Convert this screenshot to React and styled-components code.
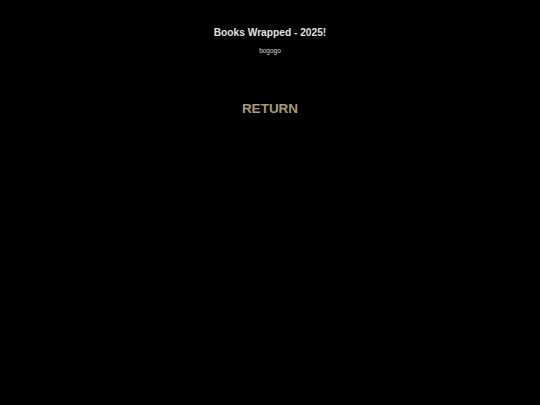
import React from "react";
import styled, { createGlobalStyle } from "styled-components";

const GlobalStyle = createGlobalStyle`
  html, body {
    margin: 0;
    padding: 0;
    background: #000;
    font-family: "Liberation Sans", Arial, sans-serif;
  }
`;

const Page = styled.div`
  display: flex;
  flex-direction: column;
  align-items: center;
  min-height: 405px;
  padding-top: 27px;
  box-sizing: border-box;
`;

const Title = styled.h1`
  margin: 0;
  font-size: 10.2px;
  font-weight: bold;
  color: #e0e0e0;
  line-height: 12px;
`;

const User = styled.div`
  margin-top: 8px;
  font-size: 6.5px;
  color: #d8d8d8;
  line-height: 8px;
  -webkit-font-smoothing: antialiased;
`;

const ReturnButton = styled.button`
  margin-top: 46px;
  background: none;
  border: none;
  padding: 0;
  font-family: inherit;
  font-size: 13.5px;
  font-weight: bold;
  color: #a89a72;
  line-height: 16px;
  cursor: pointer;
`;

const App = () => {
  return (
    <>
      <GlobalStyle />
      <Page>
        <Title>Books Wrapped - 2025!</Title>
        <User>bogogo</User>
        <ReturnButton>RETURN</ReturnButton>
      </Page>
    </>
  );
};

export default App;
